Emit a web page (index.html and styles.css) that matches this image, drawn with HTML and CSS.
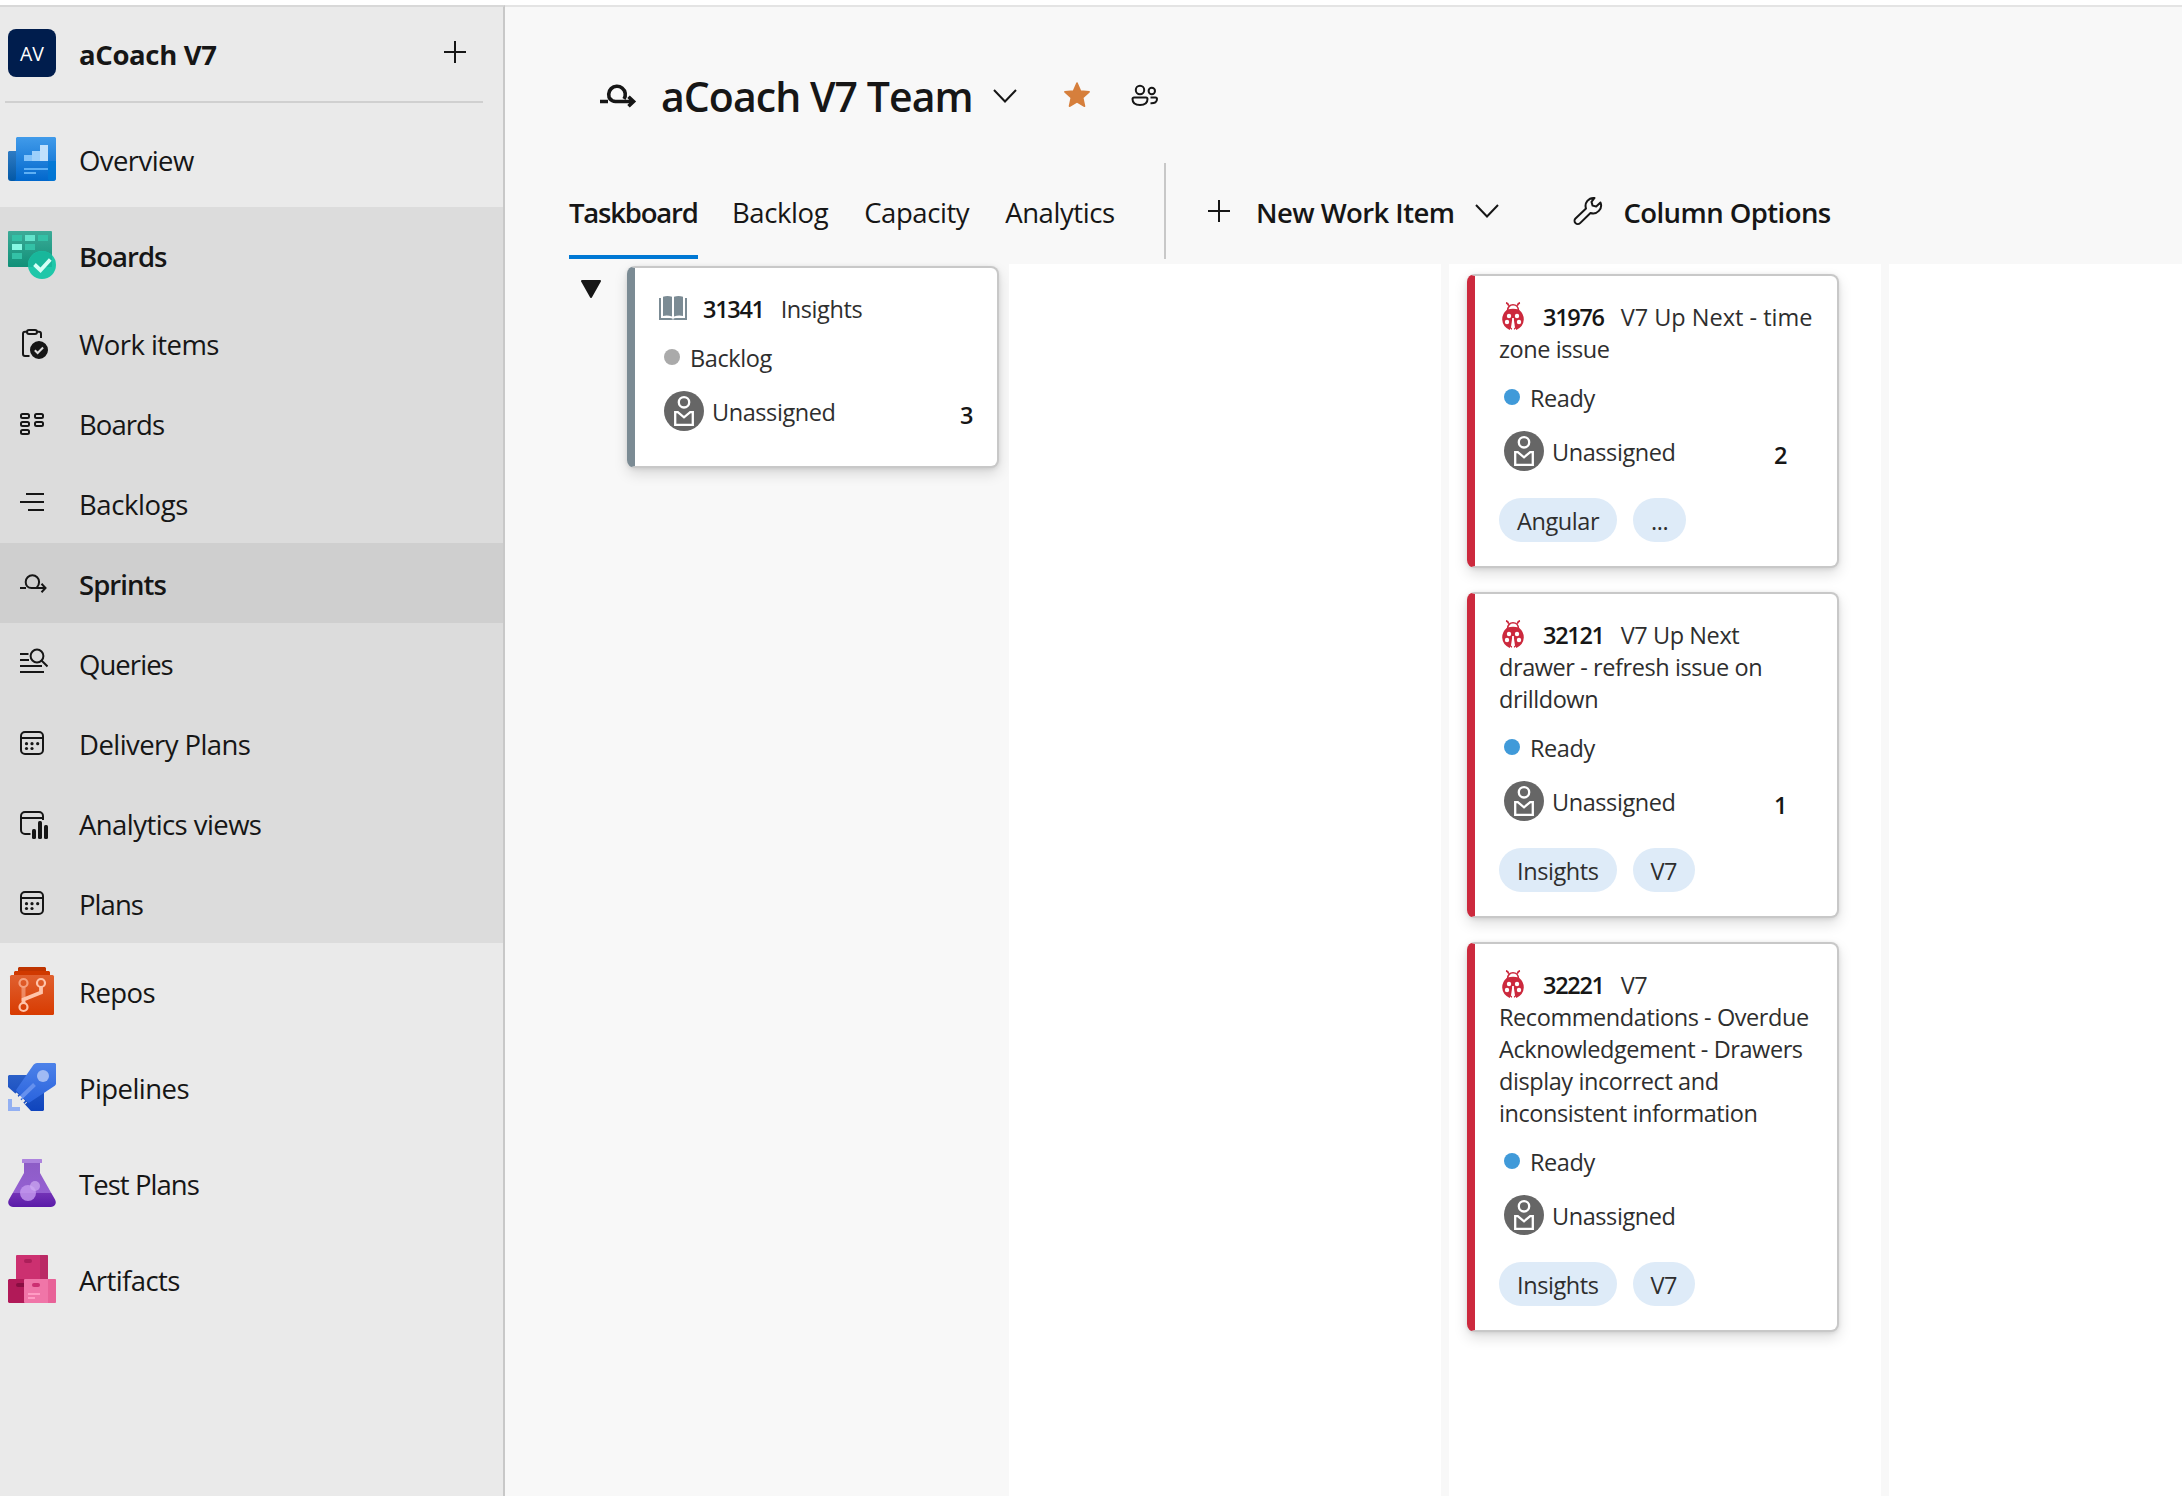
FILE: index.html
```html
<!DOCTYPE html>
<html lang="en">
<head>
<meta charset="utf-8">
<title>aCoach V7 Team - Taskboard</title>
<link rel="stylesheet" href="styles.css">
</head>
<body>
<svg width="0" height="0" class="defs" aria-hidden="true">
  <defs>
    <linearGradient id="g-blue" x1="0" y1="0" x2="0" y2="1"><stop offset="0" stop-color="#419bea"/><stop offset="1" stop-color="#0167cc"/></linearGradient>
    <linearGradient id="g-blue-dark" x1="0" y1="0" x2="0" y2="1"><stop offset="0" stop-color="#2f7cc4"/><stop offset="1" stop-color="#0358a6"/></linearGradient>
    <linearGradient id="g-green" x1="0" y1="0" x2="0" y2="1"><stop offset="0" stop-color="#3cab98"/><stop offset="1" stop-color="#119078"/></linearGradient>
    <linearGradient id="g-orange" x1="0" y1="0" x2="0" y2="1"><stop offset="0" stop-color="#e0602f"/><stop offset="1" stop-color="#d83b01"/></linearGradient>
    <linearGradient id="g-navy" x1="0" y1="0" x2="0" y2="1"><stop offset="0" stop-color="#2b60c8"/><stop offset="1" stop-color="#0f44bd"/></linearGradient>
    <linearGradient id="g-rocket" x1="0" y1="0" x2="0" y2="1"><stop offset="0" stop-color="#4d82e9"/><stop offset="1" stop-color="#2a63dd"/></linearGradient>
    <linearGradient id="g-purple" x1="0" y1="0" x2="0" y2="1"><stop offset="0" stop-color="#8d5cc6"/><stop offset="1" stop-color="#9560d2"/></linearGradient>
    <linearGradient id="g-liquid" x1="0" y1="0" x2="0" y2="1"><stop offset="0" stop-color="#7332b6"/><stop offset="1" stop-color="#5a1ba8"/></linearGradient>
    <symbol id="bug" viewBox="0 0 28 28">
      <path d="M7 .8C8.600 1 9.300 2.300 9.800 3.800M21 .8C19.400 1 18.700 2.300 18.200 3.800" fill="none" stroke="#cc293d" stroke-width="1.700"/>
      <path d="M8.500 9C8.500 5 11 2.800 14 2.800S19.500 5 19.500 9" fill="none" stroke="#cc293d" stroke-width="1.600"/>
      <path d="M8.300 7.500Q14 6 19.700 7.500Q24.800 11.500 24.800 17.500Q24.500 24.500 17.300 28L16.500 26.500L15 28L14.600 16H13.400L13 28L11.500 26.500L10.700 28Q3.500 24.500 3.200 17.500Q3.200 11.500 8.300 7.500Z" fill="#cc293d"/>
      <g fill="#fff"><circle cx="10" cy="14" r="2.200"/><circle cx="18" cy="14" r="2.200"/><circle cx="8" cy="20" r="2.200"/><circle cx="20" cy="20" r="2.200"/><path d="M13.400 16h1.200l1.400 9.500-.8.8h-2.400l-.8-.8z"/></g>
      <path d="M14 8v8" stroke="#cc293d" stroke-width="1.200"/>
    </symbol>
    <symbol id="person" viewBox="0 0 40 40">
      <circle cx="20" cy="20" r="20" fill="#666"/>
      <g fill="none" stroke="#fff" stroke-width="2.300"><circle cx="20" cy="11.300" r="5.200"/><path d="M11.200 33.800V21.200h2.600L20 26.300l6.200-5.100h2.600v12.600z"/></g>
    </symbol>
    <symbol id="calendar" viewBox="0 0 32 32">
      <rect x="5" y="5" width="22" height="22" rx="4"/><path d="M5 11h22"/>
      <g fill="#161616" stroke="none"><circle cx="10.500" cy="16.700" r="1.600"/><circle cx="16" cy="16.700" r="1.600"/><circle cx="21.700" cy="16.700" r="1.600"/><circle cx="10.500" cy="21.500" r="1.600"/><circle cx="16" cy="21.500" r="1.600"/></g>
    </symbol>
    <symbol id="sprint" viewBox="0 0 32 32">
      <path d="M4 21h6M29 21H15.500C12 21 9.700 18.300 9.700 15a6.700 6.700 0 0 1 13.400 0c0 2-.8 4-2.300 5.500M25.500 16.800 29.500 21l-4 4.200"/>
    </symbol>
    <symbol id="chevron" viewBox="0 0 24 14"><path d="M1 1l11 11.500L23 1"/></symbol>
    <symbol id="plus" viewBox="0 0 22 22"><path d="M11 0v22M0 11h22"/></symbol>
  </defs>
</svg>

<div class="app">
  <nav class="sidebar">
    <div class="project">
      <div class="project-badge">AV</div>
      <div class="project-name">aCoach V7</div>
      <svg class="line-icon add" width="22" height="22"><use href="#plus"/></svg>
    </div>

    <a class="hub">
      <svg width="48" height="48" viewBox="0 0 48 48"><path d="M1 16h8v30H3a3 3 0 0 1-3-3V17z" fill="url(#g-blue-dark)"/><path d="M9 2h38l1 1v40a3 3 0 0 1-3 3H5a3 3 0 0 0 3-3V3z" fill="url(#g-blue)"/><path d="M40 26h8v17a3 3 0 0 1-3 3h-2a3 3 0 0 1-3-3z" fill="#0078d4" opacity=".8"/><path d="M16 20h8v6h-8z" fill="#83c3fa"/><path d="M24 16h8v10h-8z" fill="#9dd0fb"/><path d="M32 10h8v16h-8z" fill="#c0e0fc"/><path d="M16 33h24v2H16zM16 37h12v2H16z" fill="#5eb0f5"/></svg>
      <span>Overview</span>
    </a>

    <div class="group">
      <a class="hub strong">
        <svg width="48" height="48" viewBox="0 0 48 48"><rect width="44" height="36" rx="1" fill="url(#g-green)"/><g fill="#33c1a6"><path d="M4 4h10v6H4zM30 4h10v6H30zM17 13h10v6H17zM4 22h10v6H4z"/><path d="M17 4h10v6H17z" fill="#62e3cb"/><path d="M4 13h10v6H4z" fill="#86f8e3"/></g><circle cx="34" cy="34" r="14" fill="#1fc7a9"/><path d="M44 24.300V36H20.200A14 14 0 0 1 44 24.300z" fill="#18b79b"/><path d="M26.500 33.500l6 5.700L42.300 28.500" fill="none" stroke="#d5fff6" stroke-width="3.800"/></svg>
        <span>Boards</span>
      </a>
      <a class="item"><svg class="line-icon" width="32" height="32" viewBox="0 0 32 32"><path d="M11 4.800H9a2 2 0 0 0-2 2V27a2 2 0 0 0 2 2h4.500M21 4.800h2a2 2 0 0 1 2 2V11"/><rect x="11" y="3" width="10" height="4" rx="2"/><circle cx="23" cy="23" r="8" fill="#161616"/><path d="M18.800 23.300l2.800 2.700 5.500-5.500" stroke="#dcdcdc"/></svg><span>Work items</span></a>
      <a class="item tight"><svg class="line-icon" width="32" height="32" viewBox="0 0 32 32"><rect x="5" y="7" width="8" height="4" rx="1.500"/><rect x="5" y="15" width="8" height="4" rx="1.500"/><rect x="5" y="23" width="8" height="4" rx="1.500"/><rect x="19" y="7" width="8" height="4" rx="1.500"/><rect x="19" y="15" width="8" height="4" rx="1.500"/></svg><span>Boards</span></a>
      <a class="item loose"><svg class="line-icon" width="32" height="32" viewBox="0 0 32 32"><path d="M10 7h18M4 15h24M12 23h16"/></svg><span>Backlogs</span></a>
      <a class="item current strong"><svg class="line-icon" width="32" height="32"><use href="#sprint"/></svg><span>Sprints</span></a>
      <a class="item tight"><svg class="line-icon" width="32" height="32" viewBox="0 0 32 32"><path d="M4 7h8.500M4 13h9M4 19h22M4 25h24"/><circle cx="21" cy="9" r="6.400"/><path d="M25.500 13.500l6 6"/></svg><span>Queries</span></a>
      <a class="item"><svg class="line-icon" width="32" height="32"><use href="#calendar"/></svg><span>Delivery Plans</span></a>
      <a class="item"><svg class="line-icon" width="32" height="32" viewBox="0 0 32 32"><path d="M14.500 27H9a4 4 0 0 1-4-4V9a4 4 0 0 1 4-4h14a4 4 0 0 1 4 4v4M5 11h22"/><g fill="#161616" stroke="none"><rect x="16" y="22" width="4" height="10" rx="1.500"/><rect x="22" y="14" width="4" height="18" rx="1.500"/><rect x="28" y="18" width="4" height="14" rx="1.500"/></g></svg><span>Analytics views</span></a>
      <a class="item tight"><svg class="line-icon" width="32" height="32"><use href="#calendar"/></svg><span>Plans</span></a>
    </div>

    <a class="hub">
      <svg width="48" height="48" viewBox="0 0 48 48"><path d="M11 0h26l1 1v4H10V1z" fill="#bf3400"/><path d="M7 4h34l1 1v4H6V5z" fill="#d03900"/><rect x="2" y="8" width="44" height="40" rx="1.500" fill="url(#g-orange)"/><g fill="none" stroke="#ffc4ab"><path d="M15.500 20v14" stroke-width="4" opacity=".5"/><path d="M33 20v5.500L15.500 32.500V36" stroke-width="3.800"/><circle cx="15.500" cy="16" r="4" stroke-width="2.200" stroke="#f5a07d"/><circle cx="33" cy="16" r="4" stroke-width="2.200"/><circle cx="15.500" cy="40" r="4" stroke-width="2.200"/></g></svg>
      <span>Repos</span>
    </a>
    <a class="hub">
      <svg width="48" height="48" viewBox="0 0 48 48"><path d="M1 12h19l16 16v19l-1 1H23L17 41.500 9 32 0 24V13z" fill="url(#g-navy)"/><path d="M29 0H47l1 1V20.500q0 1.500-1.200 2.300L21.500 39.500q-1 .6-1.800-.2L8.600 28.200q-.8-.8-.2-1.800L25.500 1.800Q27 0 29 0z" fill="url(#g-rocket)"/><circle cx="35" cy="13" r="6" fill="#a0baf4"/><path d="M12.500 35L26.500 21.500" stroke="#6691ee" stroke-width="4"/><path d="M7.500 30.500l10.500 10" stroke="#eaeaea" stroke-width="3" stroke-dasharray="3 1.500"/><path d="M0 36h4v8h8v4H0z" fill="#93b0f2"/></svg>
      <span>Pipelines</span>
    </a>
    <a class="hub tight">
      <svg width="48" height="48" viewBox="0 0 48 48"><path d="M16 3h16v11l11.300 20H4.700L16 14z" fill="url(#g-purple)"/><path d="M4.700 34h38.600l3.700 6.500c2 3.500 0 7.500-4 7.500H5c-4 0-6-4-4-7.500z" fill="url(#g-liquid)"/><rect x="14" width="20" height="4" rx=".5" fill="#ad83de"/><circle cx="20" cy="34" r="8" fill="#c59bf0" opacity=".8"/><circle cx="27" cy="27" r="5" fill="#cfadf2" opacity=".7"/></svg>
      <span>Test Plans</span>
    </a>
    <a class="hub">
      <svg width="48" height="48" viewBox="0 0 48 48"><rect x="8" width="32" height="25" rx="1" fill="#cc3070"/><path d="M32 0h7l1 1v23h-8z" fill="#ba2a65"/><rect x="16" y="4" width="8" height="4" rx="2" fill="#ac1f5a"/><path d="M1 24h16v24H1l-1-1V25z" fill="#b11a58"/><path d="M10 28h6v4h-6a2 2 0 0 1 0-4z" fill="#880e41"/><rect x="16" y="24" width="32" height="24" rx="1" fill="#f075a8"/><path d="M40 24h7l1 1v22l-1 1h-7z" fill="#e86298"/><rect x="24" y="28" width="8" height="4" rx="2" fill="#cc2f71"/><path d="M20 38h12v2H20zM20 42h7v2h-7z" fill="#ff9cc4"/></svg>
      <span>Artifacts</span>
    </a>
  </nav>

  <main class="main">
    <header class="title-row">
      <svg class="title-icon" width="40" height="28" viewBox="0 0 40 28"><path d="M2 20.500h8M12.500 18.700A8.300 8.300 0 1 1 26 18" fill="none" stroke="#161616" stroke-width="3.600"/><path d="M12 17.500q2 3 5.500 3H34M30.500 15.800l5 4.700-5 4.700" fill="none" stroke="#161616" stroke-width="3.600"/></svg>
      <h1>aCoach V7 Team</h1>
      <svg class="line-icon title-chevron" width="24" height="14"><use href="#chevron"/></svg>
      <svg class="star" width="28" height="28" viewBox="0 0 28 28"><path d="M14 2l3.500 8 8.600.8-6.400 5.900 1.800 8.500-7.500-4.300-7.500 4.300 1.800-8.500L1.900 10.800l8.600-.8z" fill="#d67f3c" stroke="#d67f3c" stroke-width="1.600" stroke-linejoin="round"/></svg>
      <svg class="line-icon people" width="28" height="24" viewBox="0 0 28 24"><circle cx="9" cy="6" r="4.200"/><circle cx="20.800" cy="7" r="3.200"/><path d="M3 13.500h12a1.500 1.500 0 0 1 1.500 1.500c0 4-3 6-7.500 6s-7.500-2-7.500-6A1.500 1.500 0 0 1 3 13.500zM19.500 13.500h5A1.500 1.500 0 0 1 26 15c0 3-2 4.500-6.500 4.300"/></svg>
    </header>

    <div class="toolbar">
      <div class="tabs">
        <a class="tab selected">Taskboard</a>
        <a class="tab">Backlog</a>
        <a class="tab">Capacity</a>
        <a class="tab">Analytics</a>
      </div>
      <div class="command new-item">
        <svg class="line-icon" width="22" height="22"><use href="#plus"/></svg>
        <span>New Work Item</span>
        <svg class="line-icon" width="24" height="14"><use href="#chevron"/></svg>
      </div>
      <div class="command columns-option">
        <svg class="line-icon" width="30" height="30" viewBox="0 0 30 30"><path d="M21.500 2A8 8 0 0 0 13 12.500L2.500 22.500a3.250 3.250 0 0 0 4.600 4.600L17.500 17A8 8 0 0 0 27.500 6.500l-4.300 4-3.600-.9-1.100-3.700z" stroke-linejoin="round"/></svg>
        <span>Column Options</span>
      </div>
    </div>

    <div class="board">
      <section class="lane-parent">
        <svg class="collapse" width="20" height="18" viewBox="0 0 20 18"><path d="M1 1h18L10 17z" fill="#161616" stroke="#161616" stroke-width="2" stroke-linejoin="round"/></svg>
        <article class="card story">
          <div class="card-title"><svg class="type-icon book" width="28" height="24" viewBox="0 0 28 24"><g fill="#7b8b94"><path d="M4 .8Q8.500-.8 13 .8V20.500Q8.500 19 4 20z"/><path d="M24 .8Q19.500-.8 15 .8V20.500Q19.500 19 24 20z"/><path d="M0 2h2v20h9q2 0 3 1 1-1 3-1h9V2h2v22H15.500q-1.500-1-3 0H0z"/></g></svg><b>31341</b>Insights</div>
          <div class="state backlog">Backlog</div>
          <div class="assignee"><svg width="40" height="40"><use href="#person"/></svg><span>Unassigned</span><b class="count">3</b></div>
        </article>
      </section>
      <section class="column"></section>
      <section class="column">
        <article class="card">
          <div class="card-title"><svg class="type-icon" width="28" height="28"><use href="#bug"/></svg><b>31976</b><span class="wide">V7 Up Next - time</span> zone issue</div>
          <div class="state">Ready</div>
          <div class="assignee"><svg width="40" height="40"><use href="#person"/></svg><span>Unassigned</span><b class="count">2</b></div>
          <div class="tags"><span class="tag">Angular</span><span class="tag">...</span></div>
        </article>
        <article class="card">
          <div class="card-title"><svg class="type-icon" width="28" height="28"><use href="#bug"/></svg><b>32121</b>V7 Up Next drawer - refresh issue on drilldown</div>
          <div class="state">Ready</div>
          <div class="assignee"><svg width="40" height="40"><use href="#person"/></svg><span>Unassigned</span><b class="count">1</b></div>
          <div class="tags"><span class="tag">Insights</span><span class="tag">V7</span></div>
        </article>
        <article class="card">
          <div class="card-title"><svg class="type-icon" width="28" height="28"><use href="#bug"/></svg><b>32221</b>V7 Recommendations - Overdue Acknowledgement - Drawers display incorrect and inconsistent information</div>
          <div class="state">Ready</div>
          <div class="assignee"><svg width="40" height="40"><use href="#person"/></svg><span>Unassigned</span></div>
          <div class="tags"><span class="tag">Insights</span><span class="tag">V7</span></div>
        </article>
      </section>
      <section class="column"></section>
    </div>
  </main>
</div>
</body>
</html>
```
FILE: styles.css
```css
* { box-sizing: border-box; }

body {
  margin: 0;
  background: #fff;
  color: #161616;
  font: 27.5px/36px "Open Sans", "Noto Sans", sans-serif;
}

.defs { display: block; position: absolute; }
svg { display: block; flex: none; }

.line-icon {
  fill: none;
  stroke: #161616;
  stroke-width: 2;
}

.app {
  display: flex;
  height: 1496px;
  padding-top: 5px;
  overflow: hidden;
}

/* Sidebar */
.sidebar {
  flex: none;
  width: 505px;
  background: #eaeaea;
  border-top: 2px solid #d8d8d8;
  border-right: 2px solid #c8c8c8;
}

.project {
  display: flex;
  align-items: center;
  height: 96px;
  margin: 0 20px 8px 5px;
  padding: 0 17px 2px 3px;
  border-bottom: 2px solid #d0d0d0;
}

.project-badge {
  width: 48px;
  height: 48px;
  border-radius: 8px;
  background: #001d4d;
  color: #fff;
  font-size: 19.5px;
  line-height: 49px;
  text-align: center;
}

.project-name {
  flex: 1;
  margin-left: 23px;
  padding-top: 4px;
  font-weight: 700;
  letter-spacing: -0.35px;
}

.add { margin-top: -3px; }

.hub, .item {
  display: flex;
  align-items: center;
  letter-spacing: -0.57px;
}

.hub { height: 96px; padding-left: 8px; gap: 23px; }
.item { height: 80px; padding-left: 16px; gap: 31px; }
.hub span, .item span { padding-top: 3px; }
.group { background: #dcdcdc; }
.current { background: #cfcfcf; }
.tight { letter-spacing: -0.95px; }
.loose { letter-spacing: -0.4px; }
.strong { font-weight: 600; letter-spacing: -0.95px; }

/* Page header */
.main {
  flex: 1;
  min-width: 0;
  display: flex;
  flex-direction: column;
  background: #f8f8f8;
  border-top: 2px solid #e4e4e4;
}

.title-row {
  display: flex;
  align-items: center;
  height: 156px;
  padding: 22px 0 0 93px;
}

h1 {
  width: 310px;
  margin: 0 0 0 23px;
  font-size: 41px;
  font-weight: 600;
  line-height: 56px;
  letter-spacing: -0.95px;
  white-space: nowrap;
}

.title-icon { margin-top: -2px; }
.title-chevron { margin-left: 22px; }
.star { margin: -3px 0 0 46px; }
.people { margin: 0 0 0 40px; }

.toolbar { display: flex; height: 96px; }

.tabs {
  display: flex;
  gap: 36px;
  width: 661px;
  padding-left: 64px;
  border-right: 2px solid #c8c8c8;
}

.tab {
  padding-top: 32px;
  letter-spacing: -0.42px;
}

.selected {
  width: 129px;
  margin-right: -2px;
  font-weight: 600;
  letter-spacing: -1.2px;
  border-bottom: 4px solid #0078d4;
}

.command {
  display: flex;
  align-items: center;
  height: 96px;
  font-weight: 600;
  letter-spacing: -0.57px;
}

.command span { padding-top: 3px; }
.new-item { margin-left: 42px; gap: 26px; }
.new-item span { margin-right: -5px; }
.columns-option { margin-left: 74px; gap: 20px; }

/* Board */
.board {
  flex: 1;
  display: grid;
  grid-template-columns: 504px 432px 440px 1fr;
  margin-top: 5px;
  font-size: 23.5px;
  line-height: 32px;
  letter-spacing: -0.42px;
}

.lane-parent {
  display: flex;
  align-items: flex-start;
  gap: 26px;
  padding: 2px 0 0 76px;
}

.collapse { margin-top: 14px; }

.column {
  background: #fff;
  padding: 10px 0 0 18px;
}

.column + .column { margin-left: 8px; }

.card {
  width: 372px;
  margin-bottom: 24px;
  padding: 25px 22px 24px 24px;
  border: 2px solid #c8c8c8;
  border-left: 8px solid #cc293d;
  border-radius: 8px;
  background: #fff;
  box-shadow: 0 6px 14px rgba(0, 0, 0, .13), 0 1px 4px rgba(0, 0, 0, .1);
  color: #2e2e2e;
}

.story { border-left-color: #7b8b94; padding-bottom: 35px; }

.card-title b {
  margin-right: 17px;
  color: #161616;
  font-weight: 600;
  letter-spacing: -1.3px;
}

.wide { letter-spacing: 0; }

.type-icon {
  display: inline-block;
  margin-right: 16px;
  vertical-align: -4px;
}

.book { vertical-align: -2px; }

.state {
  display: flex;
  align-items: center;
  gap: 10px;
  height: 32px;
  margin-top: 18px;
  padding: 0 0 2px 5px;
}

.state::before {
  content: "";
  width: 16px;
  height: 16px;
  margin-top: -2px;
  border-radius: 50%;
  background: #409ad9;
}

.backlog::before { background: #aaa; }

.assignee {
  display: flex;
  align-items: center;
  height: 40px;
  margin-top: 16px;
  padding-left: 5px;
}

.assignee span { margin-left: 8px; padding-top: 2px; }

.count {
  width: 41px;
  margin-left: auto;
  padding-top: 7px;
  color: #161616;
  font-weight: 600;
}

.story .count { width: 15px; }

.tags { display: flex; gap: 16px; margin-top: 27px; }

.tag {
  height: 44px;
  padding: 0 18px;
  border-radius: 22px;
  background: #deebf8;
  line-height: 46px;
}
```
